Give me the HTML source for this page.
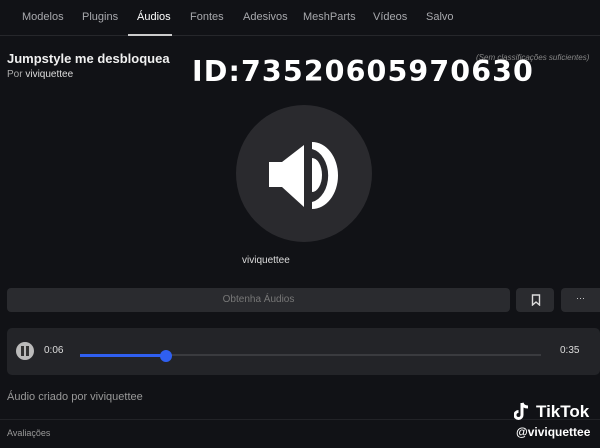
<!DOCTYPE html>
<html><head><style>
body{margin:0;width:600px;height:448px;background:#111216;font-family:"Liberation Sans",sans-serif;color:#ddd;position:relative;overflow:hidden}
.a{position:absolute;white-space:nowrap}
.nav{font-size:11px;color:#a8a9ad;top:11px}
</style></head><body>
<div class="a nav" style="left:22px">Modelos</div>
<div class="a nav" style="left:82px">Plugins</div>
<div class="a nav" style="left:137px;color:#fff">Áudios</div>
<div class="a nav" style="left:190px">Fontes</div>
<div class="a nav" style="left:243px">Adesivos</div>
<div class="a nav" style="left:303px">MeshParts</div>
<div class="a nav" style="left:373px">Vídeos</div>
<div class="a nav" style="left:426px">Salvo</div>
<div class="a" style="left:0;top:35px;width:600px;height:1px;background:#26272b"></div>
<div class="a" style="left:128px;top:34px;width:44px;height:2px;background:#ccc"></div>
<div class="a" style="left:7px;top:51px;font-size:13px;font-weight:bold;color:#f0f0f0">Jumpstyle me desbloquea</div>
<div class="a" style="left:7px;top:69px;font-size:10px;color:#aaa">Por <span style="color:#ddd">viviquettee</span></div>
<div class="a" style="left:476px;top:53px;font-size:8px;font-style:italic;color:#888">(Sem classificações suficientes)</div>
<div class="a" style="left:192px;top:55px;font-family:'DejaVu Sans',sans-serif;font-size:28.5px;font-weight:bold;color:#fff;letter-spacing:1.1px">ID:73520605970630</div>
<div class="a" style="left:236px;top:105px;width:136px;height:137px;border-radius:50%;background:#2a2a2e"></div>
<svg class="a" style="left:0;top:0" width="600" height="448">
<path d="M269 162H282L304 145V207L282 187H269Z" fill="#fff"/>
<path d="M312 158A10 17 0 0 1 312 192Z" fill="#fff"/>
<path d="M312 142A26 33.5 0 0 1 312 209V202A20 27 0 0 0 312 149Z" fill="#fff"/>
</svg>
<div class="a" style="left:242px;top:255px;font-size:10px;color:#ddd">viviquettee</div>
<div class="a" style="left:7px;top:288px;width:503px;height:24px;border-radius:4px;background:#2a2b2f;color:#777;font-size:10px;text-align:center;line-height:24px">Obtenha Áudios</div>
<div class="a" style="left:516px;top:288px;width:38px;height:24px;border-radius:4px;background:#2a2b2f"></div>
<svg class="a" style="left:531px;top:294px" width="10" height="12"><path d="M1.5 1H8.5V11L5 8L1.5 11Z" fill="none" stroke="#ddd" stroke-width="1.4"/></svg>
<div class="a" style="left:561px;top:288px;width:39px;height:24px;border-radius:4px 0 0 4px;background:#2a2b2f;color:#ddd;font-size:9px;text-align:center;line-height:20px">···</div>
<div class="a" style="left:7px;top:328px;width:593px;height:47px;border-radius:5px;background:#232428"></div>
<div class="a" style="left:16px;top:342px;width:18px;height:18px;border-radius:50%;background:#bbb"></div>
<div class="a" style="left:21px;top:346px;width:3px;height:10px;background:#333"></div>
<div class="a" style="left:26px;top:346px;width:3px;height:10px;background:#333"></div>
<div class="a" style="left:44px;top:345px;font-size:10px;color:#ddd">0:06</div>
<div class="a" style="left:80px;top:354px;width:461px;height:2px;background:#3a3b3f"></div>
<div class="a" style="left:80px;top:354px;width:86px;height:3px;background:#2f5ff0"></div>
<div class="a" style="left:160px;top:350px;width:12px;height:12px;border-radius:50%;background:#2f5ff0"></div>
<div class="a" style="left:560px;top:345px;font-size:10px;color:#ddd">0:35</div>
<div class="a" style="left:7px;top:391px;font-size:11px;color:#999">Áudio criado por viviquettee</div>
<div class="a" style="left:0;top:419px;width:600px;height:1px;background:#222327"></div>
<div class="a" style="left:7px;top:428px;font-size:9px;color:#999">Avaliações</div>
<svg class="a" style="left:514px;top:401px" width="18" height="20"><path d="M8 2V14A3.5 3.5 0 1 1 4.5 10.5" fill="none" stroke="#fff" stroke-width="3"/><path d="M8 2C9 5 11 6 14 6" fill="none" stroke="#fff" stroke-width="3"/></svg>
<div class="a" style="left:536px;top:402px;font-size:17px;font-weight:bold;color:#fff">TikTok</div>
<div class="a" style="left:516px;top:425px;font-size:12px;font-weight:bold;color:#fff">@viviquettee</div>
</body></html>
